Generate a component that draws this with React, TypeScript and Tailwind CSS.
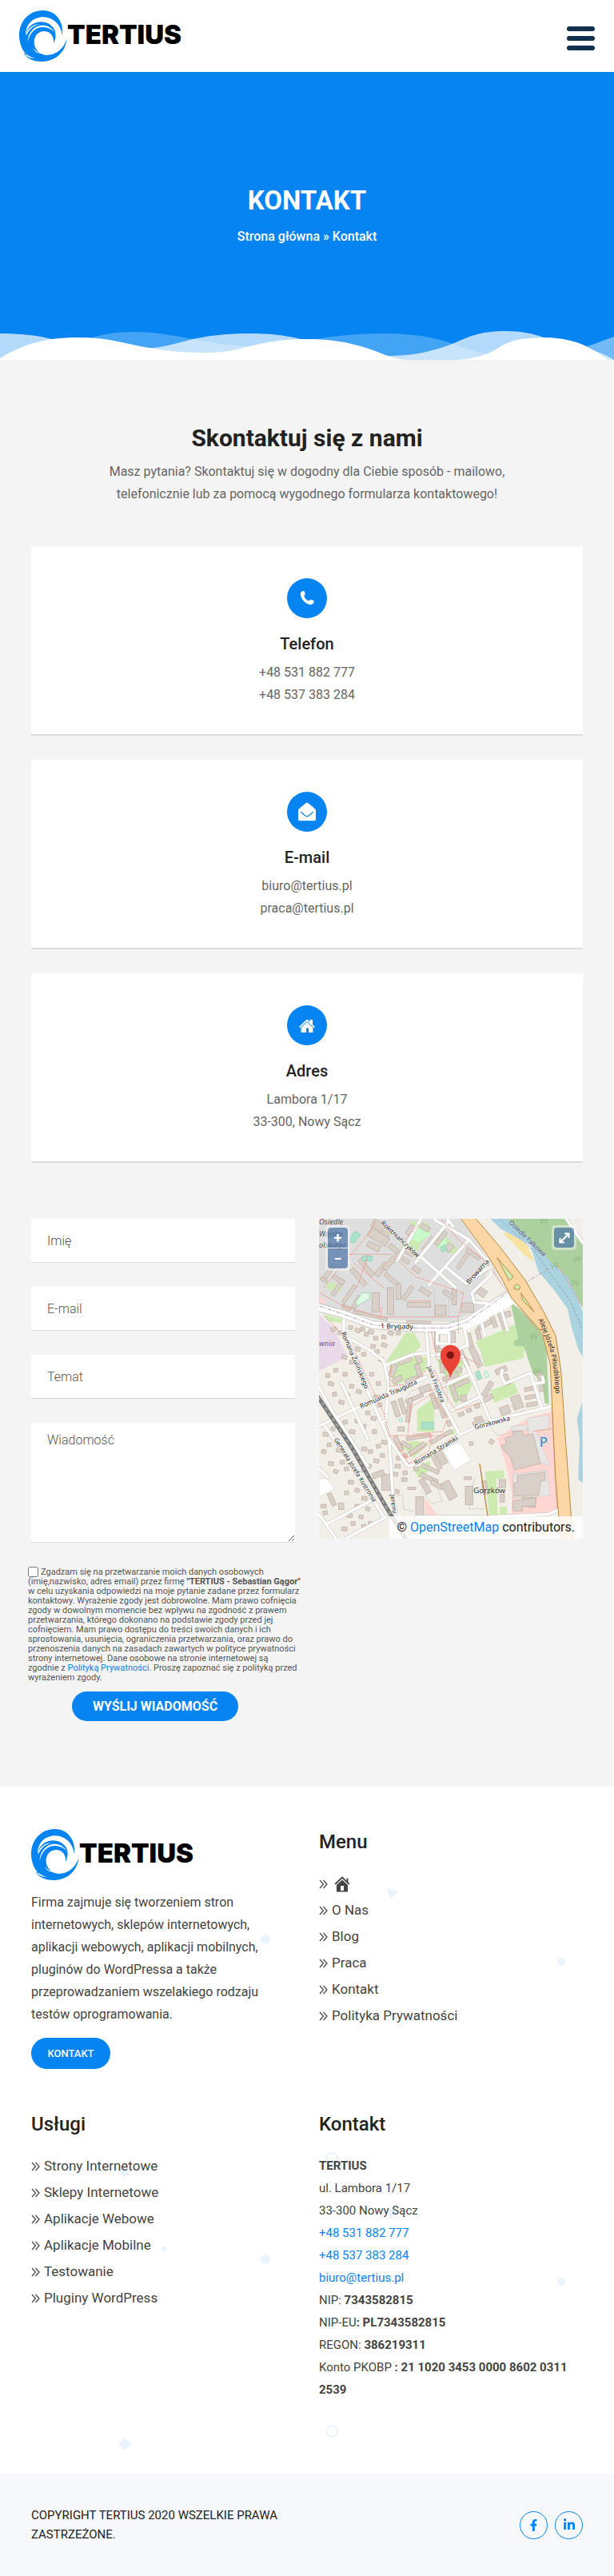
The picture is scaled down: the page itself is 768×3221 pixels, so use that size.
import React from "react";
import { FaFacebookF, FaLinkedinIn } from "react-icons/fa";

type Block = [number, number, number, number, number];

function Logo() {
  return (
    <a href="#" className="flex h-16 w-[200px] items-center" aria-label="Tertius">
      <svg viewBox="72 39 180 192" className="h-16 w-[60px] shrink-0">
        <path
          fill="#0584f2"
          d="M234 134C240 86 214 39 160 39C108 39 72 82 72 132C72 156 80 182 94 199L91 204C104 222 128 231 158 231C212 230 246 192 250 148C238 184 210 207 176 207C148 205 128 184 128 158C128 134 144 117 167 117C190 118 204 137 201 162C211 145 210 124 205 112C196 94 177 82 152 82C122 84 103 102 97 127C97 92 124 64 162 64C203 65 230 96 234 134Z"
        />
        <path fill="#fff" d="M104 157C105 121 131 93 163 95C184 97 198 107 206 124C195 109 179 102 160 102C132 102 112 123 104 157Z" />
        <path fill="#fff" d="M97 127C107 103 128 89 156 91C134 91 112 104 99 133Z" />
        <path fill="#fff" d="M123 177C131 194 146 199 168 199C148 204 128 197 123 177Z" />
        <path fill="#fff" d="M88 202C103 216 116 219 134 220C118 216 106 211 95 199C98 207 110 214 118 217Z" />
      </svg>
      <span className="pb-1 font-[Inter] text-[33px] leading-9 font-black text-black">TERTIUS</span>
    </a>
  );
}

function Waves() {
  return (
    <svg viewBox="0 0 768 40" preserveAspectRatio="none" className="absolute inset-x-0 bottom-0 h-10 w-full">
      <path
        fill="#fff"
        fillOpacity=".25"
        d="M60 40C90 20 120 5 165 5C220 5 255 21 310 23C360 25 400 7 480 7C560 7 580 30 612 33C680 40 730 26 768 11V40Z"
      />
      <path
        fill="#fff"
        fillOpacity=".7"
        d="M0 7C25 7 45 9 65 14C110 24 150 27 190 25C225 22 240 7 315 7C335 7 355 9 372 13C420 24 440 35 490 35C520 35 548 27 568 19C590 9 605 4 632 4C652 4 667 7 680 12C715 26 740 22 768 40H0Z"
      />
      <path
        fill="#fff"
        d="M0 38C25 22 55 12 96 12C140 12 155 20 187 25C205 28 225 31 255 31C305 32 315 14 385 14C430 14 458 24 485 35C494 38 500 39 508 40H573C610 37 618 27 632 20C645 14 660 12 683 12C722 13 744 27 760 40H0Z"
      />
      <path fill="#fff" fillOpacity=".25" d="M735 24C747 19 758 14 768 11V40H760C752 34 745 28 735 24Z" />
    </svg>
  );
}

function PhoneIcon() {
  return (
    <svg viewBox="0 0 20 20" className="size-5 fill-white">
      <path d="M3 1.8C4.2.7 6.4.6 7 1.8L7.6 4.3C7.9 5.4 7.3 6.200 6.300 6.700C6.700 9.600 9.300 12.600 12.800 13.200C13.200 12.200 14.100 11.600 15.200 11.900L17.700 12.600C19 13.200 19 15.300 17.900 16.500C16 18.800 10.900 18.500 6.400 14C1.500 9.200.9 4.100 3 1.800Z" />
    </svg>
  );
}

function MailIcon() {
  return (
    <svg viewBox="0 0 24 24" className="size-6">
      <path fill="#fff" d="M12 .5C13 .5 20 6.500 23 9.500V21C23 22.500 22.300 23.300 21 23.300H3C1.700 23.300 1 22.500 1 21V9.500C4 6.500 11 .5 12 .5Z" />
      <path fill="none" stroke="#0584f2" strokeWidth="1.200" strokeLinecap="round" d="M4.500 12.500L10 17Q12 18.500 14 17L19.500 12.500" />
    </svg>
  );
}

function HomeIcon() {
  return (
    <svg viewBox="0 0 20 17" className="h-[17px] w-5 fill-white">
      <path d="M10 .5L13.600 4V1H17V7.200L20 10L18.800 11.200L10 2.900L1.200 11.200L0 10Z" />
      <path d="M10 4L17.400 11V17H12V11.500H9V17H2.600V11Z" />
    </svg>
  );
}

function SmallHome() {
  return (
    <svg viewBox="0 0 20 20" className="ml-[3px] size-5">
      <path fill="none" stroke="#444" strokeWidth="1.800" d="M1.200 10L10 1.500L18.800 10M16.500 7V2.500" />
      <path fill="#444" fillRule="evenodd" d="M10 4.500L17 11V19.500H3V11ZM8 12V18H12V12Z" />
    </svg>
  );
}

function InfoCard({ icon, title, lines }: { icon: React.ReactNode; title: string; lines: string[] }) {
  return (
    <article className="flex flex-col items-center border-b-2 border-[#ddd] bg-white pt-10 pb-[35px] text-center">
      <div className="flex size-[50px] items-center justify-center rounded-full bg-[#0584f2]">{icon}</div>
      <h3 className="mt-5 mb-[10px] text-xl leading-6 font-medium text-[#222]">{title}</h3>
      {lines.map((l) => (
        <p key={l} className="leading-7 text-[#666]">{l}</p>
      ))}
    </article>
  );
}

/* City blocks: centre x, centre y, width, height, rotation */
const blocks: Block[] = [
  [285, 100, 60, 30, 30], [280, 140, 80, 34, 32], [262, 175, 50, 22, 25], [310, 120, 30, 30, 30],
  [345, 190, 18, 60, -50], [370, 220, 14, 60, -55], [395, 195, 40, 22, 30], [422, 262, 30, 18, 35],
  [400, 115, 20, 40, 35], [455, 105, 34, 20, 30], [465, 165, 12, 60, 38], [515, 145, 16, 60, 38],
  [545, 180, 26, 30, 38], [600, 225, 14, 80, 35], [635, 205, 60, 14, 35], [650, 275, 14, 70, 38],
  [668, 348, 32, 28, 35], [615, 405, 46, 36, 0], [235, 255, 18, 80, -40], [205, 290, 18, 80, -40],
  [290, 262, 20, 60, 40], [320, 240, 20, 56, 40], [330, 300, 16, 66, -50], [270, 385, 26, 72, 0],
  [355, 345, 18, 56, 0], [325, 380, 24, 100, 0], [390, 350, 16, 60, 35], [455, 345, 44, 18, 35],
  [432, 395, 86, 18, 0], [514, 415, 40, 38, 0], [565, 365, 16, 60, 0], [542, 355, 44, 16, 35],
  [170, 355, 14, 80, 35], [128, 330, 14, 70, 35], [95, 270, 16, 60, 35], [198, 385, 16, 50, 30],
  [130, 300, 50, 16, 35], [75, 300, 26, 12, 30], [160, 405, 34, 12, 22], [250, 435, 130, 10, 13],
  [432, 460, 90, 10, 2], [680, 470, 60, 16, -30], [712, 455, 16, 50, -20], [765, 430, 24, 20, -15],
  [745, 455, 16, 60, -18], [655, 505, 16, 40, -15], [625, 530, 14, 60, -15], [500, 530, 20, 60, 0],
  [560, 515, 18, 40, 0], [525, 565, 60, 14, 0], [600, 595, 18, 70, -25], [645, 590, 22, 80, -25],
  [560, 630, 70, 16, 20], [520, 620, 16, 60, 0], [550, 665, 60, 16, -20], [590, 690, 66, 16, -25],
  [565, 725, 16, 60, -20], [600, 745, 20, 24, 0], [490, 755, 18, 60, -20], [515, 780, 18, 80, -20],
  [455, 710, 44, 24, -20], [415, 745, 70, 14, -25], [430, 640, 18, 50, -20], [430, 595, 20, 36, -20],
  [335, 640, 22, 50, 20], [350, 675, 40, 18, -30], [380, 605, 50, 16, -20], [405, 675, 50, 16, -20],
  [395, 790, 16, 90, 8], [345, 785, 18, 60, -18], [370, 775, 16, 60, -18], [430, 890, 90, 14, -10],
  [385, 920, 40, 14, 30], [425, 935, 70, 18, -35], [355, 915, 16, 60, -25], [515, 890, 90, 14, -30],
  [690, 710, 18, 60, 30], [690, 745, 40, 18, -30], [740, 640, 44, 20, -25], [760, 675, 20, 40, -20],
  [755, 790, 36, 30, -20], [800, 760, 36, 50, -20], [845, 710, 34, 14, -10], [850, 740, 40, 14, -10],
  [855, 768, 40, 14, -10], [890, 700, 16, 40, -10], [885, 660, 16, 30, -10], [655, 820, 30, 10, -15],
  [655, 835, 44, 10, -15], [590, 805, 22, 14, -20], [620, 790, 20, 14, -20], [650, 775, 20, 14, -20],
  [545, 840, 14, 20, -20], [495, 980, 16, 70, -30], [515, 965, 26, 60, -30], [475, 1010, 70, 14, 25],
  [470, 1045, 70, 16, 25], [500, 1070, 50, 16, 30], [545, 1090, 34, 70, -28], [455, 1075, 20, 60, -30],
  [435, 1150, 30, 70, 0], [615, 1045, 28, 10, 0], [620, 1110, 28, 70, 0], [680, 1080, 18, 50, -10],
  [745, 1065, 24, 30, 0], [745, 1120, 16, 30, 0], [310, 1060, 36, 60, 0], [280, 1030, 44, 20, -20],
  [105, 1125, 16, 50, -25], [140, 1150, 20, 24, 0], [805, 1145, 30, 26, 0], [845, 1135, 50, 36, 5],
  [628, 915, 14, 14, -20], [704, 908, 16, 16, 30], [365, 860, 24, 16, 0], [405, 1083, 30, 8, 0],
];

const houses: [number, number][] = [
  [110, 487], [135, 500], [175, 480], [200, 490], [220, 485], [235, 505], [250, 495], [270, 520], [300, 515],
  [325, 500], [355, 500], [260, 550], [300, 545], [275, 570], [290, 600], [200, 560], [225, 580], [180, 610],
  [150, 590], [120, 640], [155, 655], [100, 690], [115, 730], [90, 660], [140, 760], [165, 735], [180, 700],
  [205, 720], [255, 655], [280, 690], [270, 740], [285, 770], [240, 800], [260, 820], [200, 830], [225, 850],
  [180, 870], [155, 835], [265, 870], [300, 910], [280, 925], [250, 945], [225, 935], [205, 955], [295, 960],
  [270, 980], [245, 1000], [225, 1015], [80, 880], [110, 860], [95, 920], [130, 940], [75, 945], [145, 985],
  [100, 990], [120, 1020], [160, 1010], [175, 1060], [200, 1090], [160, 1100], [225, 1120], [240, 1160],
  [200, 1150], [170, 1185], [215, 1190], [185, 1215], [150, 1235], [250, 1215], [225, 1225], [350, 1000],
  [355, 970], [380, 1025], [375, 1050], [350, 1095], [380, 960], [420, 1010], [345, 1030], [80, 1175], [72, 1150],
];

const minorRoads = [
  "M55 700L110 800L145 850L240 1000M57 850L190 785L300 735L460 665",
  "M150 450L150 510L240 560L300 605L318 690L308 830M170 520L240 720L320 900L390 1000L420 990L590 880L700 830L930 775",
  "M140 685L240 900M80 850L150 950L300 1190M320 900L335 1120L345 1170",
  "M308 830L290 835M310 620L410 580L465 575M460 490L470 620L520 760L585 880",
  "M490 715L620 655M555 790L660 740M595 590L620 640L700 830M600 470L615 545L560 570L480 585",
  "M500 500V540H545V500ZM665 455L680 510M740 410L765 490M745 640L740 660L755 690L850 650L890 775M870 690L900 685L895 665",
  "M350 230L440 72M420 235L545 80M470 320L620 150M440 215L570 330M535 255L610 315L700 250L705 280L630 350L640 385L690 390M490 75L620 150L690 230M540 75L560 100",
  "M57 1010L90 1040M57 1180L120 1270M90 1215L250 1130M160 1270L310 1190M985 72L1045 160M420 1190L700 1190L920 1180L960 1160",
];

const footways = [
  "M80 440L170 530L300 800L320 880L395 990L470 940L480 880M320 885H540",
  "M75 330L140 250L250 120L270 80M170 205H330L420 290L600 350L580 440H290M60 350L150 400L290 440V400M190 240L300 330M240 210L200 330",
  "M480 500L500 600L560 640L600 590L665 620M490 640L530 730L570 790L670 760M330 620L320 700L400 690L460 640M400 770L390 880M400 780L480 730L540 820L520 870L410 880",
  "M390 380H480M580 500V440M430 95L380 150M520 80L580 150L680 230L745 320L930 560L940 760M930 780L950 1160M950 240L1045 400M860 870L930 860",
  "M360 910L385 970L450 930L480 890M470 720L530 700L560 640",
];

function MapLabel({ x, y, r, size, children }: { x: number; y: number; r: number; size: number; children: string }) {
  return (
    <text
      x={x}
      y={y}
      fontSize={size}
      transform={`rotate(${r} ${x} ${y})`}
      fill="#222"
      stroke="#fff"
      strokeWidth="4"
      strokeOpacity=".8"
      paintOrder="stroke"
    >
      {children}
    </text>
  );
}

function CityMap() {
  return (
    <div className="relative h-[400px] overflow-hidden bg-[#f2efe9]">
      <svg viewBox="57 72 990 1200" preserveAspectRatio="xMidYMid slice" className="size-full" fontFamily='"Noto Sans", sans-serif'>
        <rect x="57" y="72" width="990" height="1200" fill="#f2efe9" />
        <path fill="#dedede" d="M57 72H590L690 220L750 320L640 420L560 460L290 450L57 400Z" />
        <path fill="#f2efe9" d="M660 320L700 260L745 320L690 385L640 370Z" />
        <path fill="#ead9e9" d="M57 430L110 480L165 590L57 642Z" />
        <path fill="#cdebb0" d="M400 80L470 90L475 130L440 160L420 215L360 180L400 150ZM480 150L520 125L580 190L555 205L500 180ZM90 310L145 320L135 345L85 335ZM70 430L150 450L140 462L95 455ZM310 605L345 555L380 500H415L440 550L410 580L325 620ZM645 535L810 460L830 520L825 595L680 628L665 570ZM700 715L790 685L805 725L715 762ZM500 600H600L590 660L540 670L510 640ZM540 700L600 670L635 690L615 730L570 770L550 730ZM425 790L490 740V870H425ZM410 1010L470 980L480 1010L430 1045ZM680 1020L750 1015L752 1045L722 1048L728 1185H695ZM735 1152H762V1185H735ZM885 1160L905 1150L930 1165L920 1180H885ZM360 915L420 905L470 915L410 970ZM535 870L565 860L568 880L540 885ZM320 620L380 590L460 590V640L340 700Z" />
        <path fill="#c8facc" d="M410 115L450 100L475 130L430 160L400 145ZM500 150L530 140L540 180L505 185Z" />
        <path fill="#add19e" d="M765 72H990L1047 170V405L980 290L900 220ZM775 385L810 410L880 480L910 540L920 765L905 765L895 690L860 650L825 550H790V530L805 520Z" />
        <path fill="#f7e2a0" d="M748 125L780 120L840 175L865 235L830 210Z" />
        <path fill="#aad3df" d="M700 72H765L850 150L920 225L990 290L1020 350L1047 420V590L1030 560L1005 480L990 410L940 340L880 270L850 170L740 110ZM1045 760L1025 820L1035 900L1030 1050L1047 1062Z" />
        <path fill="#ffd6d1" d="M725 895L790 850L850 815L930 795L955 1160L920 1175L780 1180V1100L760 1000ZM455 1120L505 1190H455ZM57 365L90 380L60 390Z" />
        <path fill="#e8e6e4" stroke="#ccc" strokeWidth="2" d="M840 820L920 808V860L870 865L925 1000L880 985L840 865ZM780 850L830 845L845 862L780 870ZM785 1030L910 1015L925 1110L785 1120Z" />
        <g fill="#d9d0c9" stroke="#bba99b" strokeWidth="2">
          {blocks.map(([x, y, w, h, r], i) => (
            <rect key={i} x={x - w / 2} y={y - h / 2} width={w} height={h} transform={`rotate(${r} ${x} ${y})`} />
          ))}
          {houses.map(([x, y], i) => (
            <rect key={i} x={x - 8} y={y - 7} width={i % 3 ? 16 : 20} height={14} transform={`rotate(${(i * 13) % 40 - 15} ${x} ${y})`} />
          ))}
          <path d="M755 895L785 885V868H820L825 885L860 878L888 990L790 1015L775 965L745 935L742 922L760 918ZM800 1035L905 1022V1055H890L882 1108L790 1112L787 1065L802 1060ZM785 1130L870 1118V1150H820V1168H785Z" />
        </g>
        <path fill="#fff" stroke="#ddd" strokeWidth="2" d="M520 940L585 908L626 978L565 1014ZM57 1050L85 1045L112 1085L57 1115Z" />
        <g fill="#aae0cb" stroke="#8ccfb4" strokeWidth="2">
          <path d="M183 128L195 118L213 132L190 160L170 162ZM219 211H257V230H219ZM442 835H487V860H442ZM642 650L658 641L669 670L653 678ZM510 180L528 170L538 188L520 197Z" />
          <path fill="#dffce2" d="M218 350L247 350L248 370L200 398L195 385ZM358 822H370V833H358ZM677 648L688 643L695 664L682 668Z" />
        </g>
        <g fill="none" strokeLinejoin="round" strokeLinecap="round">
          <g stroke="#c9c4be" strokeWidth="2">
            <path d="M490 340V440H545V370L600 350M380 750L400 720L480 690M625 540L680 610L640 650M530 620L540 760M700 850L725 885L800 870M775 770L800 800L830 790M640 1045L620 1160H680M440 1090L480 1140L520 1130L500 1080L440 1060M350 1110H370L375 1160L410 1170" />
          </g>
          {minorRoads.map((d, i) => (
            <path key={i} d={d} stroke="#d0cbc5" strokeWidth="14" />
          ))}
          <path d="M57 405L150 430L260 470L420 482L540 482L610 460L690 405L780 350" stroke="#c8c4bf" strokeWidth="32" />
          {minorRoads.map((d, i) => (
            <path key={i} d={d} stroke="#fff" strokeWidth="10" />
          ))}
          <path d="M57 405L150 430L260 470L420 482L540 482L610 460L690 405L780 350M610 475L700 425L790 375" stroke="#fff" strokeWidth="26" />
          <path d="M60 400L150 430L260 470L420 482L540 482L610 460L770 345L920 260" stroke="#b797b5" strokeWidth="3" strokeDasharray="14 8 3 8" />
          {footways.map((d, i) => (
            <path key={i} d={d} stroke="#fa8072" strokeWidth="3" strokeDasharray="3 7" />
          ))}
          <path d="M40 720L180 930L310 1155L390 1285" stroke="#777" strokeWidth="15" />
          <path d="M40 720L180 930L310 1155L390 1285" stroke="#aaa" strokeWidth="6" strokeDasharray="14 10" strokeLinecap="butt" />
          <path d="M660 992L690 1185" stroke="#b5893d" strokeWidth="4" />
          <path d="M735 72L870 200L1000 380L1047 490" stroke="#8aa7c4" strokeWidth="3" strokeDasharray="8 8" />
        </g>
        <path fill="#fcd6a4" stroke="#b98b3e" strokeWidth="3" d="M585 65H640L730 170L830 300L900 420L945 510L965 640L980 870L1010 1280H965L945 1050L933 800L925 620L895 500L825 420L780 370L745 300L690 210Z" />
        <path fill="#cdebb0" stroke="#b98b3e" strokeWidth="3" d="M725 217L787 290L770 304ZM790 325L798 316L812 325L808 337L790 336ZM815 350L865 422L820 376Z" />
        <g fill="none" stroke="#85b177" strokeWidth="2">
          {[[900, 80], [1025, 225], [1017, 315], [863, 515], [875, 648], [940, 250], [985, 135]].map(([x, y]) => (
            <path key={`${x}-${y}`} d={`M${x - 7} ${y + 12}V${y}M${x + 8} ${y + 12}V${y}M${x - 12} ${y}A6 8 0 1 1 ${x - 2} ${y}ZM${x + 3} ${y}A6 8 0 1 1 ${x + 13} ${y}Z`} />
          ))}
        </g>
        <g fill="#555" fontStyle="italic" fontSize="28">
          <text x="57" y="94">Osiedle</text>
          <text x="57" y="137">Wojska</text>
          <text x="57" y="180">olskiego</text>
          <text x="57" y="550" fill="#725a86">wnia</text>
        </g>
        <MapLabel x={288} y={90} r={43} size={24}>Rokitniańczyków</MapLabel>
        <MapLabel x={620} y={318} r={-48} size={25}>Browarna</MapLabel>
        <MapLabel x={288} y={483} r={1} size={26}>1 Brygady</MapLabel>
        <MapLabel x={140} y={500} r={67} size={24}>Romana Żulińskiego</MapLabel>
        <MapLabel x={215} y={784} r={-24} size={24}>Romualda Traugutta</MapLabel>
        <MapLabel x={463} y={628} r={69} size={23}>Jana Freislera</MapLabel>
        <MapLabel x={643} y={862} r={-15} size={24}>Gorzkowska</MapLabel>
        <MapLabel x={420} y={996} r={-31} size={24}>Romana Stramki</MapLabel>
        <MapLabel x={113} y={900} r={58} size={23}>Generała Józefa Kustronia</MapLabel>
        <MapLabel x={325} y={1107} r={84} size={24}>Jeremi</MapLabel>
        <path id="aleje-route" fill="none" d="M880 450Q915 525 932 600Q948 690 944 800" />
        <text fontSize="25" fill="#222">
          <textPath href="#aleje-route">Aleje Józefa Piłsudskiego</textPath>
        </text>
        <g fill="#725a86">
          <text x="768" y="88" fontSize="24" transform="rotate(44 768 88)">Osiedle Fałkowa</text>
        </g>
        <text x="637" y="1101" fontSize="29" fill="#333">Gorzków</text>
        <text x="884" y="928" fontSize="50" fill="#0092da">P</text>
        <path fill="#ea4335" d="M550 669C546 640 513 622 513 583A37.500 37.500 0 0 1 588 583C588 622 555 640 550 669Z" />
        <circle cx="550" cy="583" r="14" fill="#7f1410" />
      </svg>
      <div className="absolute top-2 left-2 flex flex-col gap-px rounded bg-white/40 p-[3px]">
        <button type="button" aria-label="Zoom in" className="flex size-[25px] items-center justify-center rounded-t-sm bg-[#003c88]/50 text-lg leading-none font-bold text-white">+</button>
        <button type="button" aria-label="Zoom out" className="flex size-[25px] items-center justify-center rounded-b-sm bg-[#003c88]/50 text-lg leading-none font-bold text-white">−</button>
      </div>
      <div className="absolute top-2 right-2 rounded bg-white/40 p-[3px]">
        <button type="button" aria-label="Full screen" className="flex size-[25px] items-center justify-center rounded-sm bg-[#003c88]/50">
          <svg viewBox="0 0 14 14" className="size-[14px] fill-none stroke-white stroke-2">
            <path d="M2.500 11.500L11.500 2.500M7 1.500H12.500V7M1.500 7V12.500H7" />
          </svg>
        </button>
      </div>
      <p className="absolute right-0 bottom-0 bg-white/80 px-[10px] leading-7 text-[#222]">
        © <a href="#" className="text-[#0584f2]">OpenStreetMap</a> contributors.
      </p>
    </div>
  );
}

function Chevrons() {
  return (
    <svg viewBox="0 0 11 12" className="mr-[5px] h-3 w-[11px] fill-none stroke-[#444]">
      <path d="M1 1L5.500 6L1 11M5.500 1L10 6L5.500 11" strokeWidth="1.200" />
    </svg>
  );
}

function LinkList({ items }: { items: React.ReactNode[] }) {
  return (
    <ul className="text-[17px]">
      {items.map((item, i) => (
        <li key={i} className="leading-[33px]">
          <a href="#" className="flex h-[33px] items-center">
            <Chevrons />
            {item}
          </a>
        </li>
      ))}
    </ul>
  );
}

function Particles() {
  return (
    <svg width="768" height="860" viewBox="0 0 768 860" className="absolute top-0 left-0 fill-[#ebf4fe]">
      <circle cx="332" cy="192" r="6" />
      <circle cx="205" cy="179" r="3" />
      <circle cx="702" cy="220" r="5" />
      <path d="M484 128L499 132L488 142Z" />
      <circle cx="332" cy="592" r="6" />
      <circle cx="205" cy="579" r="3" />
      <circle cx="702" cy="620" r="5" />
      <path d="M484 528L499 532L488 542Z" />
      <path d="M156 474L164 482L156 490L148 482ZM156 815L164 823L156 831L148 823Z" />
      <g fill="none" stroke="#ebf4fe" strokeWidth="2">
        <circle cx="415" cy="66" r="7" />
        <circle cx="415" cy="466" r="7" />
        <circle cx="415" cy="807" r="7" />
      </g>
    </svg>
  );
}

const field = "block h-[55px] w-full border-b border-[#d9d9d9] bg-white px-5 font-light placeholder:text-[#555] outline-none";
const footerHeading = "mb-5 text-2xl leading-8 font-medium text-[#222]";

export default function App() {
  return (
    <div className="bg-white font-[Roboto,'Noto_Sans',sans-serif] text-base text-[#444]">
      <header className="flex h-[90px] items-center justify-between px-6">
        <Logo />
        <button type="button" aria-label="Menu" className="mt-[6px] flex w-[35px] flex-col gap-[6px]">
          <span className="h-[6px] rounded-full bg-[#10304e]" />
          <span className="h-[6px] rounded-full bg-[#10304e]" />
          <span className="h-[6px] rounded-full bg-[#10304e]" />
        </button>
      </header>

      <section className="relative h-[360px] bg-[#0584f2] pt-[139px] text-center text-white">
        <h1 className="text-[33px] leading-[44px] font-bold">KONTAKT</h1>
        <p className="mt-[9px] leading-7 font-medium">
          <a href="#">Strona główna</a> » Kontakt
        </p>
        <Waves />
      </section>

      <main className="border-y border-[#eee] bg-[#f4f4f4] px-[39px] pt-[77px] pb-20">
        <div className="text-center">
          <h2 className="text-[30px] leading-[40px] font-bold text-[#222]">Skontaktuj się z nami</h2>
          <p className="mx-auto mt-2 max-w-[520px] leading-7 text-[#666]">
            Masz pytania? Skontaktuj się w dogodny dla Ciebie sposób - mailowo, telefonicznie lub za pomocą wygodnego formularza kontaktowego!
          </p>
        </div>

        <div className="mt-[51px] flex flex-col gap-[30px]">
          <InfoCard icon={<PhoneIcon />} title="Telefon" lines={["+48 531 882 777", "+48 537 383 284"]} />
          <InfoCard icon={<MailIcon />} title="E-mail" lines={["biuro@tertius.pl", "praca@tertius.pl"]} />
          <InfoCard icon={<HomeIcon />} title="Adres" lines={["Lambora 1/17", "33-300, Nowy Sącz"]} />
        </div>

        <div className="mt-[70px] grid grid-cols-2 gap-[30px]">
          <form>
            <div className="flex flex-col gap-[30px]">
              <input type="text" aria-label="Imię" placeholder="Imię" className={field} />
              <input type="email" aria-label="E-mail" placeholder="E-mail" className={field} />
              <input type="text" aria-label="Temat" placeholder="Temat" className={field} />
              <textarea aria-label="Wiadomość" placeholder="Wiadomość" className="block h-[150px] w-full border-b border-[#d9d9d9] bg-white px-5 py-[10px] font-light outline-none placeholder:text-[#555]" />
            </div>
            <div className="-mr-4 -ml-1 pt-[30px] text-[11px] leading-3 whitespace-nowrap text-[#555]">
              <input id="consent" type="checkbox" className="mr-[3px] size-[13px] align-bottom" />
              <label htmlFor="consent">
                Zgadzam się na przetwarzanie moich danych osobowych<br />
                (imię,nazwisko, adres email) przez firmę <b>"TERTIUS - Sebastian Gągor"</b><br />
                w celu uzyskania odpowiedzi na moje pytanie zadane przez formularz<br />
                kontaktowy. Wyrażenie zgody jest dobrowolne. Mam prawo cofnięcia<br />
                zgody w dowolnym momencie bez wpływu na zgodność z prawem<br />
                przetwarzania, którego dokonano na podstawie zgody przed jej<br />
                cofnięciem. Mam prawo dostępu do treści swoich danych i ich<br />
                sprostowania, usunięcia, ograniczenia przetwarzania, oraz prawo do<br />
                przenoszenia danych na zasadach zawartych w polityce prywatności<br />
                strony internetowej. Dane osobowe na stronie internetowej są<br />
                zgodnie z <a href="#" className="text-[#0584f2]">Polityką Prywatności</a>. Proszę zapoznać się z polityką przed<br />
                wyrażeniem zgody.
              </label>
            </div>
            <div className="mt-[11px] flex justify-center pr-5">
              <button type="submit" className="h-[37px] w-[208px] rounded-full bg-[#0584f2] text-base font-bold text-white">WYŚLIJ WIADOMOŚĆ</button>
            </div>
          </form>
          <CityMap />
        </div>
      </main>

      <footer>
        <div className="relative overflow-hidden px-[39px] pt-[54px] pb-[91px]">
          <Particles />
          <div className="relative grid grid-cols-2 gap-x-[30px] gap-y-[53px]">
            <div>
              <Logo />
              <p className="mt-[14px] max-w-[310px] leading-7">
                Firma zajmuje się tworzeniem stron internetowych, sklepów internetowych, aplikacji webowych, aplikacji mobilnych, pluginów do WordPressa a także przeprowadzaniem wszelakiego rodzaju testów oprogramowania.
              </p>
              <a href="#" className="mt-[15px] flex h-[39px] w-[99px] items-center justify-center rounded-full bg-[#0584f2] text-[13px] font-medium text-white">KONTAKT</a>
            </div>
            <nav>
              <h3 className={footerHeading}>Menu</h3>
              <LinkList items={[<SmallHome key="home" />, "O Nas", "Blog", "Praca", "Kontakt", "Polityka Prywatności"]} />
            </nav>
            <nav>
              <h3 className={footerHeading}>Usługi</h3>
              <LinkList items={["Strony Internetowe", "Sklepy Internetowe", "Aplikacje Webowe", "Aplikacje Mobilne", "Testowanie", "Pluginy WordPress"]} />
            </nav>
            <div>
              <h3 className={footerHeading}>Kontakt</h3>
              <address className="pt-[2px] text-[15px] leading-7 not-italic">
                <p><b>TERTIUS</b></p>
                <p>ul. Lambora 1/17</p>
                <p>33-300 Nowy Sącz</p>
                <p><a href="#" className="text-[#0584f2]">+48 531 882 777</a></p>
                <p><a href="#" className="text-[#0584f2]">+48 537 383 284</a></p>
                <p><a href="#" className="text-[#0584f2]">biuro@tertius.pl</a></p>
                <p>NIP: <b>7343582815</b></p>
                <p>NIP-EU<b>: PL7343582815</b></p>
                <p>REGON: <b>386219311</b></p>
                <p>Konto PKOBP <b>: 21 1020 3453 0000 8602 0311 2539</b></p>
              </address>
            </div>
          </div>
        </div>
        <div className="flex items-center justify-between bg-[#f6f8fc] px-[39px] py-10 text-[#222]">
          <p className="max-w-[330px] text-[15px] leading-6">COPYRIGHT TERTIUS 2020 WSZELKIE PRAWA ZASTRZEŻONE.</p>
          <div className="flex gap-[9px] text-[#0584f2]">
            <a href="#" aria-label="Facebook" className="flex size-[35px] items-center justify-center rounded-full border border-[#0584f2]"><FaFacebookF size={15} /></a>
            <a href="#" aria-label="LinkedIn" className="flex size-[35px] items-center justify-center rounded-full border border-[#0584f2]"><FaLinkedinIn size={16} /></a>
          </div>
        </div>
      </footer>
    </div>
  );
}
